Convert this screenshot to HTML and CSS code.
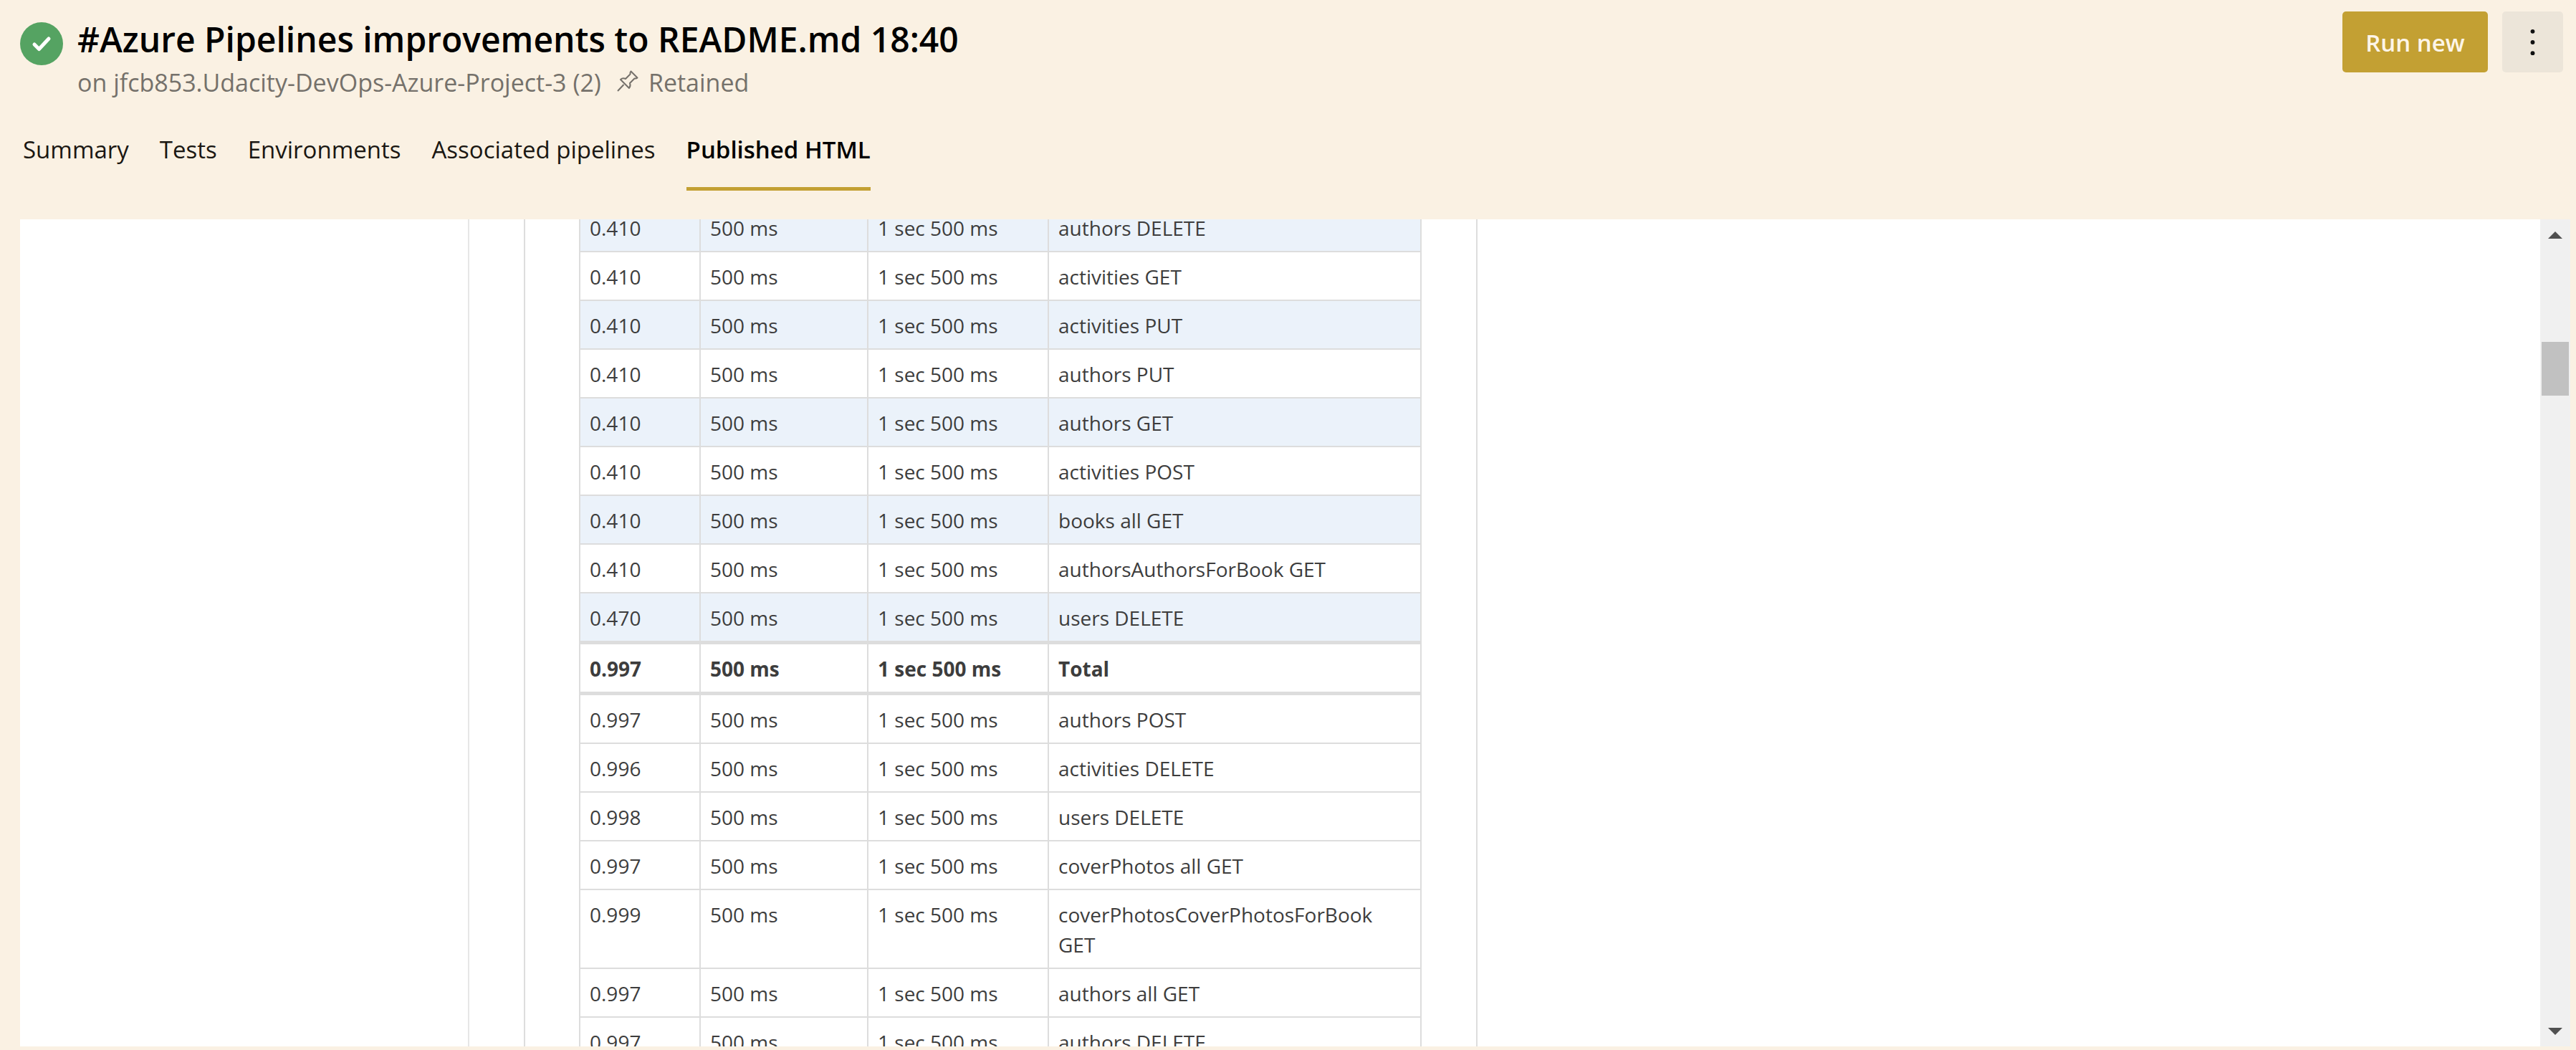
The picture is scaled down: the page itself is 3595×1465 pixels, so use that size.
FILE: index.html
```html
<!DOCTYPE html>
<html lang="en">
<head>
<meta charset="utf-8">
<title>#Azure Pipelines improvements to README.md 18:40</title>
<link rel="stylesheet" href="styles.css">
</head>
<body>
<div class="page">
  <header class="header">
    <svg class="status" viewBox="0 0 60 60" role="img" aria-label="Succeeded"><circle cx="30" cy="30" r="30" fill="#55a362"/><path d="M20 31 L26.500 37.500 L40 23" fill="none" stroke="#fff" stroke-width="5" stroke-linecap="round" stroke-linejoin="round"/></svg>
    <div class="heading">
      <h1 class="title">#Azure Pipelines improvements to README.md 18:40</h1>
      <p class="subtitle">
        <span>on jfcb853.Udacity-DevOps-Azure-Project-3 (2)</span>
        <svg class="pin" viewBox="0 0 30 30" aria-hidden="true"><path d="M1 29 L9.500 20 M19.500 1.500 L28.500 10.500 L26.500 11.500 L24.500 11.500 L18 18 C19 20.500 18.500 23 17 25 L5 13 C7 11 10 11 12 12 L18.500 5.500 L18.500 3.500 Z" fill="none" stroke="#75716b" stroke-width="2" stroke-linejoin="round"/></svg>
        <span>Retained</span>
      </p>
    </div>
    <div class="actions">
      <button class="run" type="button">Run new</button>
      <button class="more" type="button" aria-label="More actions"><svg viewBox="0 0 6 36"><circle cx="3" cy="5" r="2.500"/><circle cx="3" cy="18" r="2.500"/><circle cx="3" cy="31" r="2.500"/></svg></button>
    </div>
  </header>
  <nav class="tabs" aria-label="Run views">
    <a class="tab" href="#summary">Summary</a>
    <a class="tab" href="#tests">Tests</a>
    <a class="tab" href="#environments">Environments</a>
    <a class="tab" href="#associated">Associated pipelines</a>
    <a class="tab tab-active" href="#published" aria-current="page">Published HTML</a>
  </nav>
  <main class="report">
    <div class="report-body">
      <div class="side"></div>
      <div class="panel">
        <table class="apdex">
          <colgroup><col class="col-score"><col class="col-toleration"><col class="col-frustration"><col class="col-label"></colgroup>
          <tbody>
            <tr class="alt"><td>0.410</td><td>500 ms</td><td>1 sec 500 ms</td><td>authors DELETE</td></tr>
            <tr><td>0.410</td><td>500 ms</td><td>1 sec 500 ms</td><td>activities GET</td></tr>
            <tr class="alt"><td>0.410</td><td>500 ms</td><td>1 sec 500 ms</td><td>activities PUT</td></tr>
            <tr><td>0.410</td><td>500 ms</td><td>1 sec 500 ms</td><td>authors PUT</td></tr>
            <tr class="alt"><td>0.410</td><td>500 ms</td><td>1 sec 500 ms</td><td>authors GET</td></tr>
            <tr><td>0.410</td><td>500 ms</td><td>1 sec 500 ms</td><td>activities POST</td></tr>
            <tr class="alt"><td>0.410</td><td>500 ms</td><td>1 sec 500 ms</td><td>books all GET</td></tr>
            <tr><td>0.410</td><td>500 ms</td><td>1 sec 500 ms</td><td>authorsAuthorsForBook GET</td></tr>
            <tr class="alt last"><td>0.470</td><td>500 ms</td><td>1 sec 500 ms</td><td>users DELETE</td></tr>
          </tbody>
          <tbody>
            <tr class="total last"><td>0.997</td><td>500 ms</td><td>1 sec 500 ms</td><td>Total</td></tr>
          </tbody>
          <tbody>
            <tr><td>0.997</td><td>500 ms</td><td>1 sec 500 ms</td><td>authors POST</td></tr>
            <tr><td>0.996</td><td>500 ms</td><td>1 sec 500 ms</td><td>activities DELETE</td></tr>
            <tr><td>0.998</td><td>500 ms</td><td>1 sec 500 ms</td><td>users DELETE</td></tr>
            <tr><td>0.997</td><td>500 ms</td><td>1 sec 500 ms</td><td>coverPhotos all GET</td></tr>
            <tr><td>0.999</td><td>500 ms</td><td>1 sec 500 ms</td><td>coverPhotosCoverPhotosForBook GET</td></tr>
            <tr><td>0.997</td><td>500 ms</td><td>1 sec 500 ms</td><td>authors all GET</td></tr>
            <tr><td>0.997</td><td>500 ms</td><td>1 sec 500 ms</td><td>authors DELETE</td></tr>
          </tbody>
        </table>
      </div>
    </div>
    <div class="scrollbar">
      <button class="arrow" type="button" aria-label="Scroll up"><svg viewBox="0 0 20 10"><path d="M0 10 L10 0 L20 10 Z"/></svg></button>
      <div class="thumb"></div>
      <button class="arrow arrow-down" type="button" aria-label="Scroll down"><svg viewBox="0 0 20 10"><path d="M0 0 L20 0 L10 10 Z"/></svg></button>
    </div>
  </main>
</div>
</body>
</html>
```
FILE: styles.css
```css
* {
  box-sizing: border-box;
}

body {
  margin: 0;
  background: #faf1e3;
  color: #1a1712;
  font-family: "Segoe UI", "Open Sans", "Noto Sans", sans-serif;
}

button {
  border: 0;
  padding: 0;
  font: inherit;
}

.page {
  display: flex;
  flex-direction: column;
  height: 100vh;
  padding-bottom: 5px;
}

.header {
  display: flex;
  align-items: flex-start;
  padding: 16px 18px 0 28px;
}

.status {
  flex: none;
  width: 60px;
  height: 60px;
  margin: 15px 20px 0 0;
}

.heading {
  flex: 1;
  min-width: 0;
}

.title {
  margin: 0;
  color: #000;
  font-size: 48px;
  font-weight: 600;
  line-height: 78px;
}

.subtitle {
  display: flex;
  align-items: center;
  margin: 0;
  color: #75716b;
  font-size: 34px;
  line-height: 42px;
}

.pin {
  width: 30px;
  height: 30px;
  margin: 0 14px 4px 22px;
}

.actions {
  display: flex;
  gap: 20px;
}

.run,
.more {
  height: 85px;
  border-radius: 5px;
}

.run {
  width: 203px;
  padding-top: 2px;
  background: #c3a033;
  color: #fdf5e8;
  font-size: 33px;
  font-weight: 600;
}

.more {
  display: flex;
  align-items: center;
  justify-content: center;
  width: 85px;
  background: #ece5d9;
}

.more svg {
  width: 7px;
  height: 42px;
  fill: #111;
}

.tabs {
  display: flex;
  gap: 43px;
  padding: 38px 32px 40px;
  font-size: 33px;
  line-height: 48px;
}

.tab {
  height: 92px;
  padding-top: 11px;
  border-bottom: 5px solid transparent;
  color: inherit;
  text-decoration: none;
}

.tab-active {
  border-color: #c3a033;
  color: #000;
  font-weight: 600;
}

.report {
  display: flex;
  flex: 1;
  min-height: 0;
  margin: 0 8px 0 28px;
  overflow: hidden;
  background: #fff;
}

.report-body {
  display: flex;
  flex: 1;
  min-width: 0;
}

.side {
  width: 627px;
  border-right: 2px solid #e6e6e6;
}

.panel {
  margin-left: 76px;
  padding: 0 76px 0 75px;
  border: solid #ddd;
  border-width: 0 2px;
}

.apdex {
  width: 1176px;
  margin-top: -22px;
  border-left: 2px solid #ddd;
  border-spacing: 0;
  table-layout: fixed;
  color: #3d3d3d;
  font-size: 28px;
  line-height: 42px;
}

.col-score {
  width: 168px;
}

.col-toleration {
  width: 234px;
}

.col-frustration {
  width: 252px;
}

.apdex td {
  padding: 13px 13px 11px;
  border: solid #ddd;
  border-width: 0 2px 2px 0;
  vertical-align: top;
}

.apdex .alt td {
  background: #ebf2fa;
}

.apdex .last td {
  border-bottom-width: 5px;
}

.apdex .total td {
  font-weight: 700;
}

.scrollbar {
  display: flex;
  flex: none;
  flex-direction: column;
  width: 42px;
  background: #f0f0f0;
}

.arrow {
  display: flex;
  align-items: center;
  justify-content: center;
  height: 43px;
  background: none;
}

.arrow svg {
  width: 20px;
  height: 10px;
  fill: #505050;
}

.arrow-down {
  margin-top: auto;
}

.thumb {
  height: 75px;
  margin: 128px 2px 0;
  background: #c1c1c1;
}
```
